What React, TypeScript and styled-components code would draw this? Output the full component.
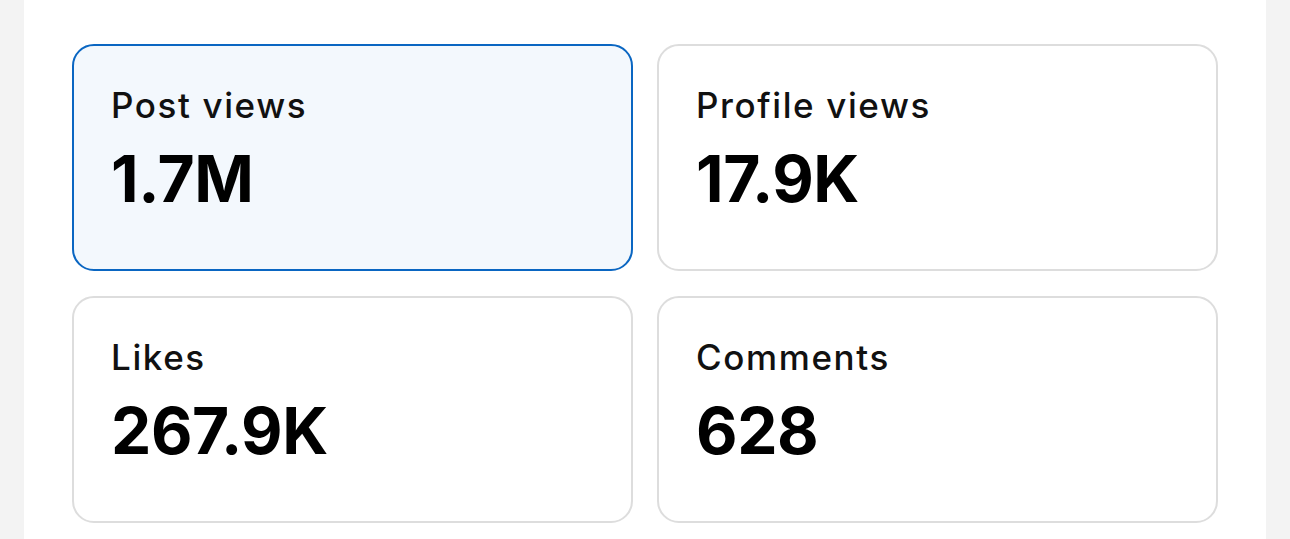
import React from 'react';
import styled, { createGlobalStyle } from 'styled-components';

const GlobalStyle = createGlobalStyle`
  html, body {
    margin: 0;
    padding: 0;
    background: #f3f3f3;
    font-family: Inter, 'Noto Sans', Arial, sans-serif;
    -webkit-font-smoothing: antialiased;
  }
`;

const Page = styled.div`
  min-height: 100vh;
  padding: 0 24px;
  box-sizing: border-box;
`;

const Panel = styled.div`
  background: #ffffff;
  min-height: 100vh;
  padding: 44px 48px;
  box-sizing: border-box;
`;

const Grid = styled.div`
  display: grid;
  grid-template-columns: 1fr 1fr;
  gap: 25px 24px;
`;

const Card = styled.div<{ $active?: boolean }>`
  box-sizing: border-box;
  height: 227px;
  padding: 38px 37px;
  border-radius: 22px;
  border: 2px solid ${p => (p.$active ? '#0a66c2' : '#dddddd')};
  background: ${p => (p.$active ? '#f3f8fd' : '#ffffff')};
  cursor: pointer;
`;

const Label = styled.div`
  font-size: 35px;
  line-height: 42.5px;
  font-weight: 500;
  color: #111111;
  letter-spacing: 1.6px;
`;

const Value = styled.div`
  margin-top: 13px;
  font-size: 64px;
  line-height: 77px;
  font-weight: 700;
  color: #000000;
  letter-spacing: -0.4px;
`;

const stats = [
  { label: 'Post views', value: '1.7M', active: true },
  { label: 'Profile views', value: '17.9K' },
  { label: 'Likes', value: '267.9K' },
  { label: 'Comments', value: '628' },
];

const App: React.FC = () => (
  <>
    <GlobalStyle />
    <Page>
      <Panel>
        <Grid>
          {stats.map(s => (
            <Card key={s.label} $active={s.active}>
              <Label>{s.label}</Label>
              <Value>{s.value}</Value>
            </Card>
          ))}
        </Grid>
      </Panel>
    </Page>
  </>
);

export default App;
